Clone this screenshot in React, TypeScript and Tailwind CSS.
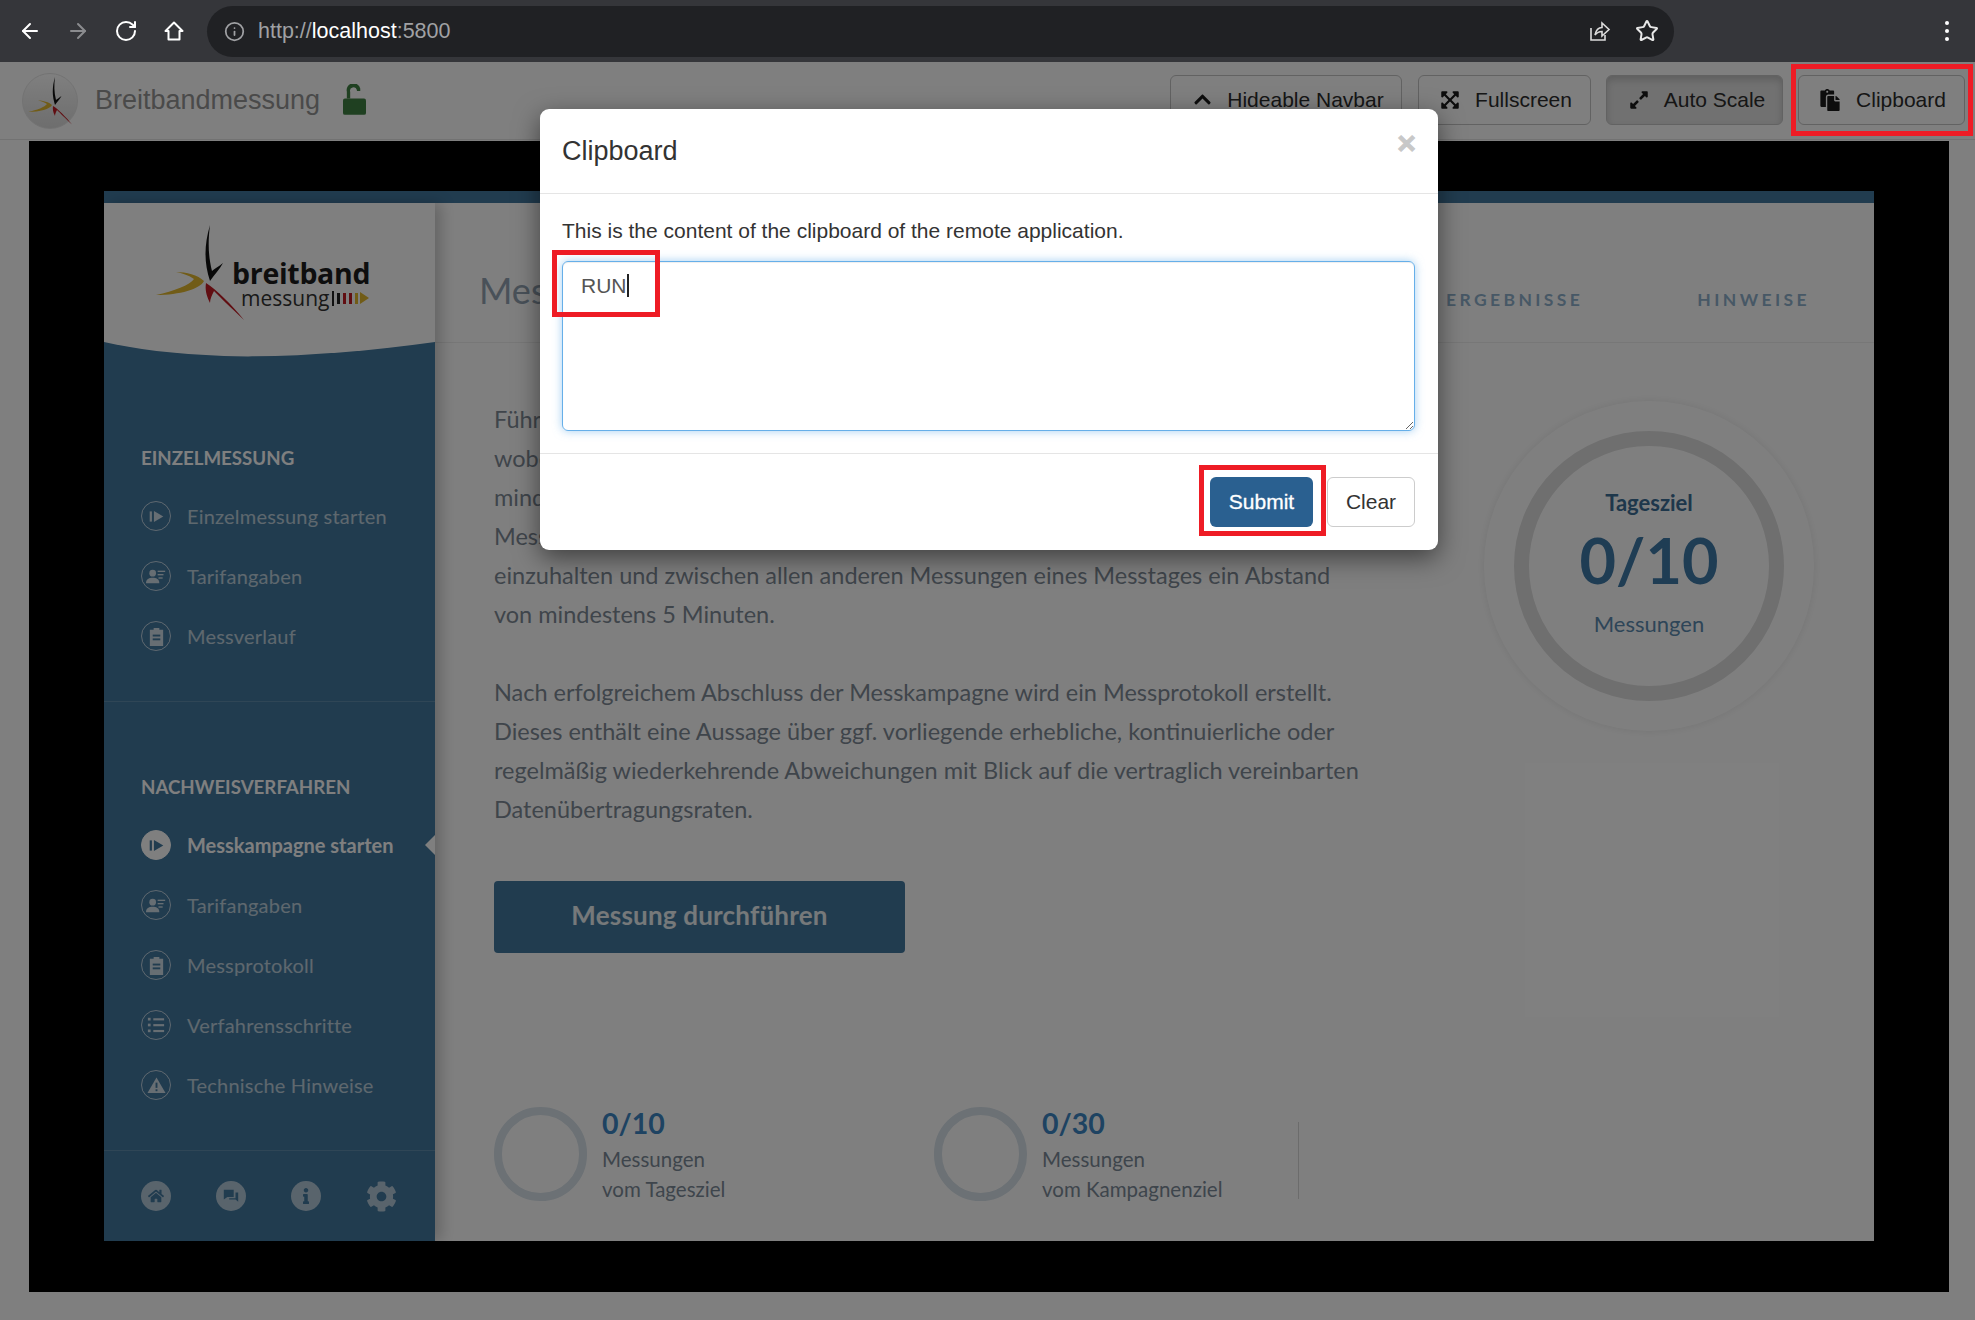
import { ReactNode } from 'react';
import { ArrowLeft, ArrowRight, Info, RotateCw, Star } from 'lucide-react';
import { FaChevronUp, FaCog, FaExpandAlt, FaExpandArrowsAlt, FaHome, FaInfo, FaPaste } from 'react-icons/fa';

const ARIAL = 'font-["Liberation_Sans",Arial,sans-serif]';
const APP_FONT = 'font-["Lato","Open_Sans",sans-serif]';

function LogoStar({ className }: { className: string }) {
  return (
    <svg viewBox="0 0 100 100" className={className}>
      <path d="M60 2C54 22 54 40 60 58C64 52 70 46 73 40C68 44 64 46 62 48C58 32 58 18 60 2Z" fill="#111" />
      <path d="M6 72C24 68 40 62 44 56C38 52 32 50 26 49C36 49 48 52 54 58C50 66 30 72 6 72Z" fill="#e3b82e" />
      <path d="M56 60C66 66 82 82 94 97C80 84 70 74 64 68C62 72 60 76 60 80C56 72 55 66 56 60Z" fill="#c21d25" />
    </svg>
  );
}

function NavButton({ icon, label, width, active }: { icon: ReactNode; label: string; width: string; active?: boolean }) {
  return (
    <div
      className={`flex h-[50px] items-center justify-center gap-[15px] rounded-[6px] border border-[#c4c4c4] text-[21px] text-[#2c2c2c] ${width} ${
        active ? 'bg-[#e2e2e2] shadow-[inset_0_4px_7px_rgba(0,0,0,0.16)]' : 'bg-white'
      }`}
    >
      {icon}
      <span>{label}</span>
    </div>
  );
}

function PlayGlyph({ color }: { color: string }) {
  return (
    <svg viewBox="0 0 20 20" className="h-[17px] w-[17px]" fill={color}>
      <rect x="2" y="4" width="2.6" height="12" />
      <path d="M7 3.5L18 10L7 16.5Z" />
    </svg>
  );
}

function UserGlyph() {
  return (
    <svg viewBox="0 0 24 20" className="h-[17px] w-[20px]" fill="#fff" fillOpacity="0.75">
      <circle cx="8" cy="6" r="4" />
      <path d="M0 18C0 13 4 11.5 8 11.5C12 11.5 16 13 16 18Z" />
      <rect x="14" y="3" width="9" height="1.6" />
      <rect x="14" y="7" width="7" height="1.6" />
      <rect x="15" y="11" width="5" height="1.6" />
    </svg>
  );
}

function ClipGlyph() {
  return (
    <svg viewBox="0 0 20 20" className="h-[19px] w-[19px]">
      <path d="M3 3H7V1H13V3H17V20H3Z" fill="#fff" fillOpacity="0.75" />
      <rect x="6" y="8" width="8" height="2" fill="#42789f" />
      <rect x="6" y="12" width="8" height="2" fill="#42789f" />
    </svg>
  );
}

function ListGlyph() {
  return (
    <svg viewBox="0 0 20 20" className="h-[18px] w-[18px]" fill="#fff" fillOpacity="0.75">
      <rect x="1" y="2" width="3" height="3" />
      <rect x="1" y="8.5" width="3" height="3" />
      <rect x="1" y="15" width="3" height="3" />
      <rect x="7" y="2.5" width="12" height="2.4" />
      <rect x="7" y="9" width="12" height="2.4" />
      <rect x="7" y="15.5" width="12" height="2.4" />
    </svg>
  );
}

function WarnGlyph() {
  return (
    <svg viewBox="0 0 20 20" className="h-[19px] w-[19px]">
      <path d="M10 1.5L19.5 18H0.5Z" fill="#fff" fillOpacity="0.75" />
      <rect x="9" y="7" width="2" height="5.5" fill="#42789f" />
      <rect x="9" y="14" width="2" height="2" fill="#42789f" />
    </svg>
  );
}

function SideItem({ icon, label, active }: { icon: ReactNode; label: string; active?: boolean }) {
  return (
    <div className="relative flex h-[60px] items-center gap-[16px]">
      <span
        className={`flex h-[30px] w-[30px] shrink-0 items-center justify-center rounded-full border-[1.5px] ${
          active ? 'border-white bg-white' : 'border-white/65'
        }`}
      >
        {icon}
      </span>
      <span className={`text-[20px] ${active ? 'font-bold tracking-normal text-white' : 'tracking-[0.2px] text-white/65'}`}>{label}</span>
      {active && (
        <span className="absolute right-0 h-0 w-0 border-y-[10px] border-r-[10px] border-y-transparent border-r-white" />
      )}
    </div>
  );
}

function FootIcon({ children }: { children: ReactNode }) {
  return (
    <span className="flex h-[30px] w-[30px] items-center justify-center rounded-full bg-white/60 text-[#42789f]">
      {children}
    </span>
  );
}

function Stat({ value, line2, width }: { value: string; line2: string; width: string }) {
  return (
    <div className={`flex gap-[15px] ${width}`}>
      <div className="h-[94px] w-[93px] shrink-0 rounded-full border-[8px] border-[#d8e2ea]" />
      <div>
        <p className="h-[37px] text-[28.5px] leading-[32px] font-bold text-[#3d86c4]">{value}</p>
        <p className="text-[20.5px] leading-[30px] text-[#7c8b99]">Messungen</p>
        <p className="text-[20.5px] leading-[30px] text-[#7c8b99]">{line2}</p>
      </div>
    </div>
  );
}

export default function App() {
  return (
    <div className={`relative h-[1320px] w-[1975px] overflow-hidden bg-white ${ARIAL}`}>
      <header className="flex h-[62px] items-center bg-[#35363a]">
        <div className="flex w-[207px] items-center gap-[24px] pl-[18px] text-white">
          <ArrowLeft size={24} strokeWidth={2} />
          <ArrowRight size={24} strokeWidth={2} className="text-[#8b8c8f]" />
          <RotateCw size={24} strokeWidth={2} />
          <svg viewBox="0 0 24 24" className="h-[24px] w-[24px]" fill="none" stroke="currentColor" strokeWidth="2" strokeLinejoin="round">
            <path d="M12 3.5L3.5 12H6.5V20.5H17.5V12H20.5Z" />
          </svg>
        </div>
        <div className="flex h-[51px] w-[1467px] items-center rounded-full bg-[#202124] pl-[17px] pr-[15px] text-[21.5px] text-[#a0a1a4]">
          <Info size={21} className="mr-[13px]" />
          <span>
            http://<span className="text-white">localhost</span>:5800
          </span>
          <svg viewBox="0 0 24 24" className="ml-auto h-[24px] w-[24px]" fill="none" stroke="#dcdcdc" strokeWidth="1.6">
            <path d="M4 9V21H18V16" />
            <path d="M8 16C9 11 12 8.5 15 8.5V4L22 10.5L15 17V12.5C12 12.5 10 13.5 8 16Z" />
          </svg>
          <Star size={24} strokeWidth={2} className="ml-[24px] text-[#e8e8e8]" />
        </div>
        <div className="ml-[271px] flex flex-col gap-[4px]">
          <span className="h-[4px] w-[4px] rounded-full bg-white" />
          <span className="h-[4px] w-[4px] rounded-full bg-white" />
          <span className="h-[4px] w-[4px] rounded-full bg-white" />
        </div>
      </header>

      <nav className="flex h-[78px] items-center border-b border-[#e4e4e4] bg-white pl-[22px] pr-[10px]">
        <div className="flex h-[56px] w-[56px] items-center justify-center rounded-full border border-[#e6e6e6] bg-gradient-to-b from-white to-[#dcdcdc]">
          <LogoStar className="h-[50px] w-[50px]" />
        </div>
        <span className="ml-[17px] text-[27px] text-[#949494]">Breitbandmessung</span>
        <svg viewBox="0 0 24 32" className="mb-[2px] ml-[23px] h-[31px] w-[23px]" fill="#3e8042">
          <path d="M2 15H22A2 2 0 0 1 24 17V30A2 2 0 0 1 22 32H2A2 2 0 0 1 0 30V17A2 2 0 0 1 2 15Z" />
          <path d="M4 15V8A7 7 0 0 1 18 4.5V7H14.5V6A3.6 3.6 0 0 0 7.5 8V15Z" />
        </svg>
        <div className="mb-[2px] ml-auto flex gap-[15px]">
          <NavButton width="mr-[1px] w-[232px] pl-[5px]" icon={<FaChevronUp size={19} className="text-[#1a1a1a]" />} label="Hideable Navbar" />
          <NavButton width="w-[173px] pl-[3px]" icon={<FaExpandArrowsAlt size={20} className="text-[#1a1a1a]" />} label="Fullscreen" />
          <NavButton width="w-[177px] pl-[5px]" icon={<FaExpandAlt size={20} className="text-[#1a1a1a]" />} label="Auto Scale" active />
          <NavButton width="w-[167px] pl-[2px]" icon={<FaPaste size={22} className="text-[#1a1a1a]" />} label="Clipboard" />
        </div>
      </nav>

      <div className="px-[29px] pb-[28px] pt-[1px]">
        <div className="h-[1151px] w-[1920px] bg-black px-[75px] pb-[51px] pt-[50px]">
          <div className={`flex h-[1050px] flex-col bg-white ${APP_FONT}`}>
            <div className="h-[12px] shrink-0 bg-[#42789f]" />
            <div className="flex min-h-0 flex-1">
              <aside className="relative z-[1] flex w-[331px] shrink-0 flex-col bg-[#42789f] shadow-[6px_0_14px_rgba(0,0,0,0.22)]">
                <div className="flex h-[139px] items-start bg-white pl-[46px] pt-[20px]">
                  <LogoStar className="h-[100px] w-[100px] shrink-0" />
                  <div className="-ml-[18px] mt-[37px]">
                    <p className="font-['Open_Sans',sans-serif] text-[28.5px] leading-[26px] font-bold tracking-[-0.3px] text-[#1c1c1c]">breitband</p>
                    <div className="ml-[9px] flex items-center">
                      <span className="font-['Open_Sans',sans-serif] text-[21px] leading-[24px] text-[#333]">messung</span>
                      <span className="ml-[3px] h-[15px] w-[2px] bg-[#222]" />
                      <span className="ml-[3px] h-[11px] w-[3px] bg-[#222]" />
                      <span className="ml-[3px] h-[11px] w-[3px] bg-[#c21d25]" />
                      <span className="ml-[3px] h-[11px] w-[3px] bg-[#c21d25]" />
                      <span className="ml-[3px] h-[11px] w-[3px] bg-[#e3b82e]" />
                      <span className="ml-[2px] h-0 w-0 border-y-[6px] border-l-[9px] border-y-transparent border-l-[#e3b82e]" />
                    </div>
                  </div>
                </div>
                <svg viewBox="0 0 331 15" preserveAspectRatio="none" className="block h-[15px] w-full">
                  <path d="M0 0H331C260 10 180 16 120 14C70 12 30 7 0 0Z" fill="#fff" />
                </svg>

                <div className="pl-[37px] pr-0 pt-[86px]">
                  <p className="text-[18.7px] leading-[30px] font-bold text-white">EINZELMESSUNG</p>
                  <div className="mt-[13px]">
                    <SideItem icon={<PlayGlyph color="rgba(255,255,255,0.75)" />} label="Einzelmessung starten" />
                    <SideItem icon={<UserGlyph />} label="Tarifangaben" />
                    <SideItem icon={<ClipGlyph />} label="Messverlauf" />
                  </div>
                </div>
                <div className="mt-[35px] h-px bg-white/15" />
                <div className="pl-[37px] pt-[70px]">
                  <p className="text-[18.7px] leading-[30px] font-bold text-white">NACHWEISVERFAHREN</p>
                  <div className="mt-[13px]">
                    <SideItem icon={<PlayGlyph color="#42789f" />} label="Messkampagne starten" active />
                    <SideItem icon={<UserGlyph />} label="Tarifangaben" />
                    <SideItem icon={<ClipGlyph />} label="Messprotokoll" />
                    <SideItem icon={<ListGlyph />} label="Verfahrensschritte" />
                    <SideItem icon={<WarnGlyph />} label="Technische Hinweise" />
                  </div>
                </div>
                <div className="mt-[35px] h-px bg-white/15" />
                <div className="flex flex-1 items-center gap-[45px] pl-[37px]">
                  <FootIcon><FaHome size={16} /></FootIcon>
                  <FootIcon>
                    <svg viewBox="0 0 20 20" className="h-[18px] w-[18px]" fill="currentColor">
                      <path d="M2 3H13V11H6L2 14Z" />
                      <path d="M15 6H18V16.5L15 14H8V12.5H15Z" />
                    </svg>
                  </FootIcon>
                  <FootIcon><FaInfo size={16} /></FootIcon>
                  <FaCog size={31} className="text-white/60" />
                </div>
              </aside>

              <main className="flex min-w-0 flex-1 flex-col">
                <div className="flex h-[140px] shrink-0 border-b border-[#eeeeee] pl-[44px] pr-[64px]">
                  <h1 className="mt-[63px] text-[36px] leading-[48px] text-[#93a3b2]">Messkampagne</h1>
                  <div className="ml-auto mt-[84px] flex gap-[114px] text-[17.5px] leading-[26px] font-bold tracking-[3.4px] text-[#8fb1cc]">
                    <span>ERGEBNISSE</span>
                    <span>HINWEISE</span>
                  </div>
                </div>

                <div className="flex flex-1 pl-[59px]">
                  <div className="w-[990px] shrink-0 pt-[57px] text-[23.5px] leading-[39px] text-[#7e8a96]">
                    <p>Führen</p>
                    <p>wobei</p>
                    <p>mindestens</p>
                    <p>Messung</p>
                    <p>einzuhalten und zwischen allen anderen Messungen eines Messtages ein Abstand</p>
                    <p>von mindestens 5 Minuten.</p>
                    <p className="mt-[39px]">Nach erfolgreichem Abschluss der Messkampagne wird ein Messprotokoll erstellt.</p>
                    <p>Dieses enthält eine Aussage über ggf. vorliegende erhebliche, kontinuierliche oder</p>
                    <p>regelmäßig wiederkehrende Abweichungen mit Blick auf die vertraglich vereinbarten</p>
                    <p>Datenübertragungsraten.</p>

                    <div className="mt-[52px] flex h-[72px] w-[411px] items-center justify-center rounded-[4px] bg-[#42789f] pb-[3px] text-[26px] font-bold tracking-[0.2px] text-white/90">
                      Messung durchführen
                    </div>

                    <div className="mt-[154px] flex">
                      <Stat value="0/10" line2="vom Tagesziel" width="w-[440px]" />
                      <Stat value="0/30" line2="vom Kampagnenziel" width="w-[364px]" />
                      <div className="mt-[15px] h-[77px] w-px bg-[#d9d9d9]" />
                    </div>
                  </div>

                  <div className="mt-[58px] flex h-[330px] w-[330px] shrink-0 items-center justify-center rounded-full shadow-[0_0_8px_rgba(0,0,0,0.09)]">
                    <div className="flex h-[270px] w-[270px] flex-col items-center rounded-full border-[15px] border-[#dfdfdf] pt-[42px] text-[#3d6e96]">
                      <p className="text-[22px] leading-[30px] font-bold">Tagesziel</p>
                      <p className="mt-[1px] text-[63px] leading-[82px] font-bold text-[#3f7aa8]">0/10</p>
                      <p className="mt-[8px] text-[22px] leading-[30px] text-[#5c8bb0]">Messungen</p>
                    </div>
                  </div>
                </div>
              </main>
            </div>
          </div>
        </div>
      </div>

      {/* dark backdrop below the browser bar */}
      <div className="absolute inset-x-0 bottom-0 top-[62px] z-10 bg-black/50" />

      <div className="absolute left-[540px] top-[109px] z-20 h-[441px] w-[898px] rounded-[9px] bg-white shadow-[0_8px_26px_rgba(0,0,0,0.5)]">
        <div className="relative h-[85px] border-b border-[#e5e5e5] px-[22px] pt-[26px]">
          <h2 className="text-[27px] leading-[32px] text-[#333]">Clipboard</h2>
          <span className="absolute right-[22px] top-[14px] text-[32px] leading-[40px] font-bold text-[#c8c8c8] [-webkit-text-stroke:1px_#c8c8c8]">×</span>
        </div>
        <div className="h-[260px] border-b border-[#e5e5e5] px-[22px] pt-[22px]">
          <p className="text-[21px] leading-[30px] text-[#333]">This is the content of the clipboard of the remote application.</p>
          <div className="relative mt-[15px]">
            <textarea
              readOnly
              defaultValue="RUN"
              className="block h-[170px] w-[853px] resize-y rounded-[6px] border border-[#66afe9] px-[18px] py-[9px] text-[21px] leading-[30px] text-[#555] shadow-[inset_0_1px_1px_rgba(0,0,0,0.07),0_0_10px_rgba(102,175,233,0.6)] outline-none"
            />
            <span className="absolute left-[65px] top-[13px] h-[23px] w-[2px] bg-[#222]" />
          </div>
        </div>
        <div className="flex justify-end gap-[14px] pl-[24px] pr-[23px] pt-[23px]">
          <div className="flex h-[50px] w-[103px] items-center justify-center rounded-[6px] bg-[#2a6090] text-[21px] text-white [-webkit-text-stroke:0.3px_white]">
            Submit
          </div>
          <div className="flex h-[50px] w-[88px] items-center justify-center rounded-[6px] border border-[#cccccc] text-[21px] text-[#333]">
            Clear
          </div>
        </div>
      </div>

      {/* red highlight frames from the annotated screenshot */}
      <div className="absolute left-[1791px] top-[64px] z-30 h-[72px] w-[182px] border-[5px] border-[#ee1c25]" />
      <div className="absolute left-[552px] top-[250px] z-30 h-[67px] w-[108px] border-[5px] border-[#ee1c25]" />
      <div className="absolute left-[1199px] top-[465px] z-30 h-[71px] w-[127px] border-[5px] border-[#ee1c25]" />
    </div>
  );
}
